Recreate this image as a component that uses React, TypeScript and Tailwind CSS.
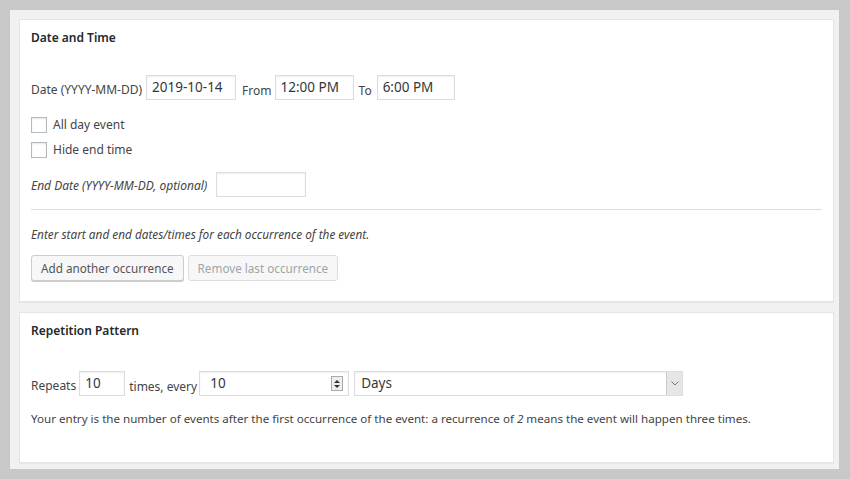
import React from "react";

const FONT = "font-['Noto_Sans','Open_Sans',sans-serif]";

function TextInput({ value, width }: { value?: string; width: string }) {
  return (
    <div
      className={`h-[25px] ${width} shrink-0 border border-[#ddd] bg-white shadow-[inset_0_1px_2px_rgba(0,0,0,0.07)] px-[5px] text-[13.5px] leading-[23px] text-[#32373c]`}
    >
      {value}
    </div>
  );
}

function Checkbox({ label }: { label: string }) {
  return (
    <div className="flex items-center h-[16px]">
      <span className="w-[16px] h-[16px] border border-[#b4b9be] bg-white shadow-[inset_0_1px_2px_rgba(0,0,0,0.1)] shrink-0" />
      <span className="ml-[6px] text-[12px] text-[#444]">{label}</span>
    </div>
  );
}

function Panel({ title, height, children }: { title: string; height: string; children: React.ReactNode }) {
  return (
    <section className={`${height} shrink-0 border border-[#e5e5e5] bg-white shadow-[0_1px_1px_rgba(0,0,0,0.04)]`}>
      <h2 className="pt-[8px] px-[11px] text-[12px] font-semibold leading-[20px] text-[#23282d]">{title}</h2>
      <div className="px-[11px]">{children}</div>
    </section>
  );
}

export default function App() {
  return (
    <div className={`w-[850px] h-[479px] bg-[#c8c8c8] pt-[10px] pl-[10px] pr-[11px] pb-[10px] ${FONT}`}>
      <div className="h-full bg-[#f1f1f1] pt-[9px] pl-[9px] pr-[5px] flex flex-col gap-[10px]">
        <Panel title="Date and Time" height="h-[283px]">
          <div className="mt-[27px] flex items-end text-[12px] text-[#444]">
            <span className="leading-[18px] mb-[1px]">Date (YYYY-MM-DD)</span>
            <span className="ml-[4px]"><TextInput value="2019-10-14" width="w-[90px]" /></span>
            <span className="ml-[6px] mr-[3px] leading-[18px]">From</span>
            <TextInput value="12:00 PM" width="w-[79px]" />
            <span className="ml-[5px] mr-[5px] leading-[18px]">To</span>
            <TextInput value="6:00 PM" width="w-[78px]" />
          </div>
          <div className="mt-[17px] flex flex-col gap-[9px]">
            <Checkbox label="All day event" />
            <Checkbox label="Hide end time" />
          </div>
          <div className="mt-[14px] flex items-end text-[12px] text-[#444]">
            <span className="italic leading-[18px] mb-[2px]">End Date (YYYY-MM-DD, optional)</span>
            <span className="ml-[9px]"><TextInput width="w-[90px]" /></span>
          </div>
          <div className="mt-[12px] border-t border-[#ddd]" />
          <p className="mt-[15px] italic text-[11.8px] leading-[18px] text-[#444]">
            Enter start and end dates/times for each occurrence of the event.
          </p>
          <div className="mt-[12px] flex gap-[4px] text-[11.7px]">
            <button className="h-[26px] px-[9px] border border-[#ccc] bg-[#f7f7f7] rounded-[3px] shadow-[0_1px_0_#ccc] text-[#555] leading-[24px]">
              Add another occurrence
            </button>
            <button
              disabled
              className="h-[26px] px-[9px] border border-[#ddd] bg-[#f7f7f7] rounded-[3px] text-[#a0a5aa] leading-[24px]"
            >
              Remove last occurrence
            </button>
          </div>
        </Panel>
        <Panel title="Repetition Pattern" height="h-[151px]">
          <div className="mt-[30px] flex items-end text-[12px] text-[#444]">
            <span className="leading-[18px] mb-[1px]">Repeats</span>
            <span className="ml-[3px]"><TextInput value="10" width="w-[46px]" /></span>
            <span className="ml-[4px] mr-[2px] leading-[18px]">times, every</span>
            <div className="h-[25px] w-[150px] shrink-0 border border-[#ddd] bg-white shadow-[inset_0_1px_2px_rgba(0,0,0,0.07)] pl-[10px] pr-[5px] flex items-center justify-between text-[13.5px] text-[#32373c]">
              <span>10</span>
              <span className="w-[12px] h-[15px] border border-[#aaa] bg-[#eee] flex flex-col items-center justify-center gap-[2px]">
                <svg width="6" height="3" viewBox="0 0 6 3"><path d="M0 3 L3 0 L6 3 Z" fill="#333" /></svg>
                <svg width="6" height="3" viewBox="0 0 6 3"><path d="M0 0 L3 3 L6 0 Z" fill="#333" /></svg>
              </span>
            </div>
            <div className="ml-[5px] h-[25px] w-[329px] shrink-0 border border-[#ddd] bg-white shadow-[inset_0_1px_2px_rgba(0,0,0,0.07)] flex items-stretch text-[13.5px] text-[#32373c]">
              <span className="flex-1 pl-[6px] leading-[23px]">Days</span>
              <span className="w-[16px] bg-[#e6e6e6] border-l border-[#ccc] flex items-center justify-center">
                <svg width="8" height="5" viewBox="0 0 8 5"><path d="M0.5 0.5 L4 4 L7.5 0.5" stroke="#777" strokeWidth="1" fill="none" /></svg>
              </span>
            </div>
          </div>
          <p className="mt-[14px] text-[11.6px] leading-[18px] text-[#444]">
            Your entry is the number of events after the first occurrence of the event: a recurrence of <em>2</em> means the event will happen three times.
          </p>
        </Panel>
      </div>
    </div>
  );
}
